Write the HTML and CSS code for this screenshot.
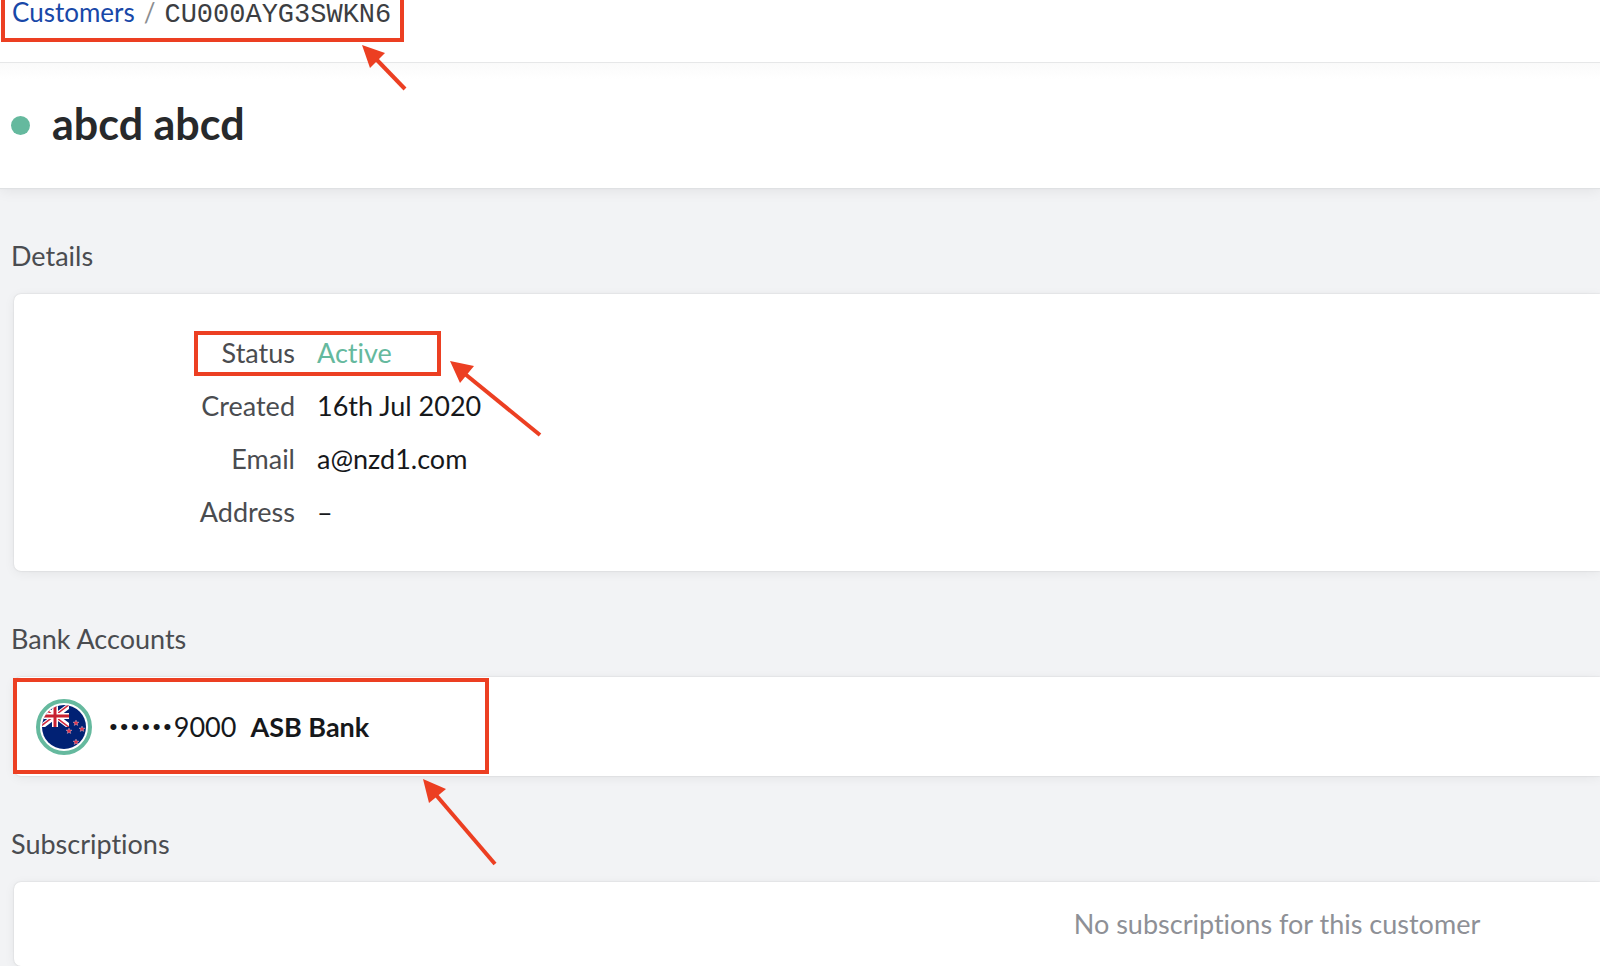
FILE: index.html
```html
<!DOCTYPE html>
<html lang="en">
  <head>
    <meta charset="UTF-8" />
    <meta name="viewport" content="width=device-width, initial-scale=1.0" />
    <title>Customer CU000AYG3SWKN6</title>
    <link rel="stylesheet" href="styles.css">
  </head>

  <body>
    <nav class="breadcrumb">
      <a href="#customers">Customers</a>
      <span class="separator">/</span>
      <span class="customer-id">CU000AYG3SWKN6</span>
      <span class="callout callout-id"></span>
      <svg class="arrow arrow-id" width="46" height="48" viewBox="0 0 46 48">
        <path class="shaft" d="M14 14 L43 44" />
        <path class="head" d="M0 0 L23 8 L8 23 Z" />
      </svg>
    </nav>

    <header class="customer-header">
      <span class="status-dot"></span>
      <h1>abcd abcd</h1>
    </header>

    <main>
      <section>
        <h2>Details</h2>
        <div class="card details-card">
          <dl class="details">
            <dt>Status</dt>
            <dd class="active">Active</dd>
            <dt>Created</dt>
            <dd>16th Jul 2020</dd>
            <dt>Email</dt>
            <dd>a@nzd1.com</dd>
            <dt>Address</dt>
            <dd>–</dd>
          </dl>
          <span class="callout callout-status"></span>
          <svg class="arrow arrow-status" width="94" height="78" viewBox="0 0 94 78">
            <path class="shaft" d="M15 13 L90 74" />
            <path class="head" d="M0 0 L24 5 L10 22 Z" />
          </svg>
        </div>
      </section>

      <section>
        <h2>Bank Accounts</h2>
        <div class="card bank-card">
          <span class="flag">
            <svg width="44" height="44" viewBox="0 0 44 44" role="img" aria-label="New Zealand">
              <defs>
                <clipPath id="round"><circle cx="22" cy="22" r="22" /></clipPath>
                <clipPath id="canton"><path d="M0 0H27V22H0Z" /></clipPath>
                <path id="star" d="M0 -3 L.8 -1 L3 -.9 L1.3 .5 L1.8 2.5 L0 1.4 L-1.8 2.5 L-1.3 .5 L-3 -.9 L-.8 -1 Z" />
              </defs>
              <g clip-path="url(#round)">
                <path fill="#012174" d="M0 0H44V44H0Z" />
                <g clip-path="url(#canton)">
                  <path stroke="#fff" stroke-width="5" d="M-1 0L28 22M28 0L-1 22" />
                  <path stroke="#d22b3f" stroke-width="1.5" d="M-1 1L28 23M28 -1L-1 21" />
                  <path stroke="#fff" stroke-width="6" d="M13 0V22M0 11H27" />
                  <path stroke="#c8202f" stroke-width="3" d="M13 0V22M0 11H27" />
                </g>
                <g fill="#e0304a" stroke="#fff" stroke-width=".3">
                  <use href="#star" x="34" y="18" />
                  <use href="#star" x="27" y="26" />
                  <use href="#star" x="40" y="24" />
                  <use href="#star" x="34" y="37" />
                </g>
              </g>
            </svg>
          </span>
          <span class="account-number">
            <span class="mask"><i>·</i><i>·</i><i>·</i><i>·</i><i>·</i><i>·</i></span>
            <span>9000</span>
          </span>
          <strong>ASB Bank</strong>
          <span class="callout callout-bank"></span>
          <svg class="arrow arrow-bank" width="76" height="90" viewBox="0 0 76 90">
            <path class="shaft" d="M13 16 L72 85" />
            <path class="head" d="M0 0 L23 10 L6 24 Z" />
          </svg>
        </div>
      </section>

      <section>
        <h2>Subscriptions</h2>
        <div class="card empty-card">
          <p>No subscriptions for this customer</p>
        </div>
      </section>
    </main>
  </body>
</html>
```

FILE: styles.css
```css
* {
  box-sizing: border-box;
}

body {
  margin: 0;
  font-family: Lato, "Liberation Sans", sans-serif;
  font-size: 27px;
  line-height: 32px;
  font-variant-ligatures: none;
  color: #16181b;
  background-color: #f2f3f5;
}

/* Breadcrumb */

.breadcrumb {
  position: relative;
  display: flex;
  align-items: baseline;
  gap: 9px;
  padding: 0 12px 35px;
  font-size: 26px;
  line-height: 24px;
  background-color: white;
  border-bottom: 1px solid #e6e7e8;
}

.breadcrumb a {
  color: #1848a8;
  text-decoration: none;
}

.separator {
  color: #8b8d90;
}

.customer-id {
  font-family: "Liberation Mono", monospace;
  font-size: 27px;
  color: #3c3e42;
}

/* Customer name */

.customer-header {
  display: flex;
  align-items: center;
  gap: 22px;
  height: 125px;
  padding: 0 11px;
  background: linear-gradient(#fafafa, white 16px);
  box-shadow: 0 1px 1px #dfe1e3, 0 2px 14px rgba(0, 0, 0, 0.08);
}

.status-dot {
  width: 19px;
  height: 19px;
  border-radius: 50%;
  background-color: #65b99e;
}

h1 {
  margin: 0 0 4px;
  font-size: 43px;
  line-height: 48px;
  font-weight: bold;
  color: #27292b;
}

/* Sections */

section {
  padding-top: 52px;
}

h2 {
  margin: 0 11px 22px;
  font-size: 27px;
  font-weight: normal;
  color: #4a4c50;
}

.card {
  position: relative;
  margin-left: 14px;
  background-color: white;
  border-radius: 7px 0 0 7px;
  box-shadow: 0 0 2px rgba(0, 0, 0, 0.14), 0 2px 12px rgba(0, 0, 0, 0.06);
}

.details-card {
  padding: 32px 0 33px;
}

.details {
  display: grid;
  grid-template-columns: 281px 1fr;
  column-gap: 22px;
  margin: 0;
  line-height: 53px;
}

.details dt {
  text-align: right;
  color: #4a4c50;
}

.details dd {
  margin: 0;
}

.details .active {
  color: #65b99e;
}

.bank-card {
  display: flex;
  align-items: center;
  height: 99px;
  padding-left: 22px;
}

.flag {
  display: flex;
  align-items: center;
  justify-content: center;
  width: 56px;
  height: 56px;
  margin-right: 17px;
  border: 4px solid #65b99e;
  border-radius: 50%;
}

.account-number {
  display: flex;
  align-items: baseline;
  gap: 2px;
  margin-right: 14px;
}

.mask {
  display: flex;
  gap: 2px;
  font-size: 32px;
  font-weight: bold;
  line-height: 24px;
}

.mask i {
  font-style: normal;
}

.empty-card {
  padding: 26px 20px 26px 60%;
  text-align: center;
}

.empty-card p {
  margin: 0;
  color: #8e9096;
}

/* Red annotations */

.callout {
  position: absolute;
  border: 4px solid #ec3f22;
}

.callout-id {
  top: -6px;
  left: 1px;
  width: 403px;
  height: 48px;
}

.callout-status {
  top: 37px;
  left: 180px;
  width: 247px;
  height: 45px;
}

.callout-bank {
  top: 1px;
  left: -1px;
  width: 476px;
  height: 96px;
}

.arrow {
  position: absolute;
  z-index: 1;
}

.arrow-id {
  top: 45px;
  left: 362px;
}

.arrow-status {
  top: 67px;
  left: 436px;
}

.arrow-bank {
  top: 102px;
  left: 409px;
}

.shaft {
  stroke: #ec3f22;
  stroke-width: 4;
}

.head {
  fill: #ec3f22;
}
```
